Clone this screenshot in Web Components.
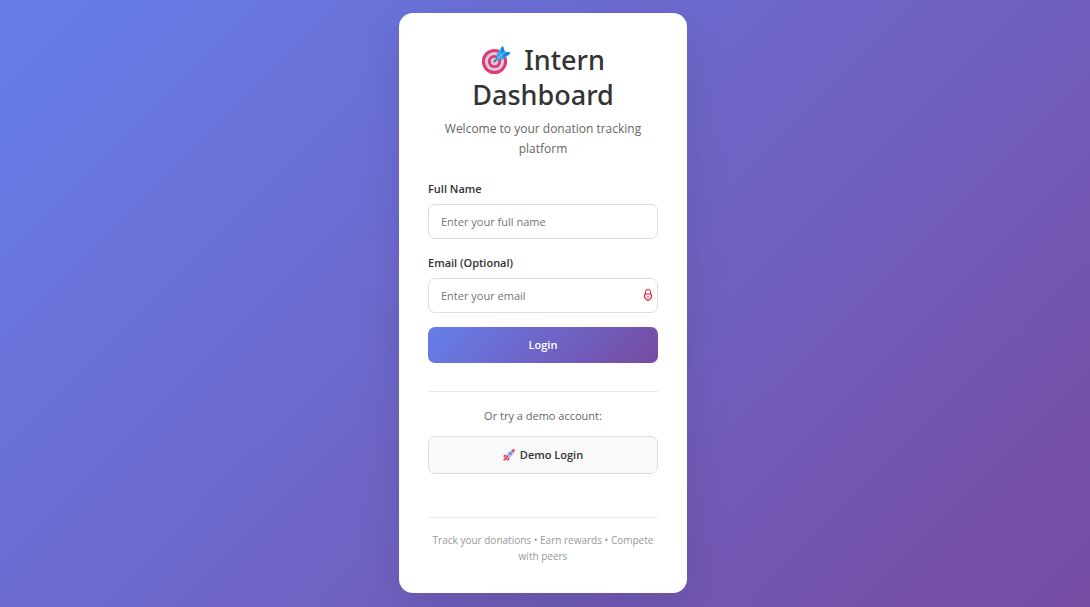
<!DOCTYPE html>
<html lang="en">
<head>
<meta charset="utf-8">
<meta name="viewport" content="width=device-width, initial-scale=1">
<title>Intern Dashboard</title>
<style>
body { margin: 0; font-family: "Open Sans", "Noto Sans", sans-serif; color: #333; }
</style>
</head>
<body>
<login-page>
  <login-card>
    <card-header>
      <span slot="title"><target-icon></target-icon> Intern Dashboard</span>
      <span slot="subtitle">Welcome to your donation tracking platform</span>
    </card-header>
    <login-form></login-form>
    <demo-section></demo-section>
    <card-footer>Track your donations • Earn rewards • Compete with peers</card-footer>
  </login-card>
</login-page>
<script>
const define = (name, html) => {
  const template = document.createElement('template');
  template.innerHTML = html;
  customElements.define(name, class extends HTMLElement {
    constructor() {
      super();
      this.attachShadow({ mode: 'open' }).append(template.content.cloneNode(true));
    }
  });
};

define('target-icon', `
<style>
:host { display: inline-block; width: 30px; height: 30px; margin-right: 6px; vertical-align: -5px; }
svg { display: block; width: 100%; height: 100%; }
</style>
<svg viewBox="0 0 30 30" aria-hidden="true">
  <circle cx="13.5" cy="16.5" r="12.6" fill="#e23a6c"/>
  <circle cx="13.5" cy="16.5" r="9.6" fill="#d5cbe2"/>
  <circle cx="13.5" cy="16.5" r="6.6" fill="#e23a6c"/>
  <circle cx="13.5" cy="16.5" r="3.7" fill="#d5cbe2"/>
  <path d="M13.2 16.7 18.5 11.5" stroke="#596a91" stroke-width="1.8" stroke-linecap="round"/>
  <path d="M15.6 14.8 15.8 9.2 20.3 2.5 22 1.2 23.6 6.3 29.2 7.6 28.2 9.4 21.3 14.8Z" fill="#35a9ee"/>
  <path d="m20.3 2.5 1.7-1.3 1.6 5.1-3.3 3.8Zm1.6 7.3 3.8-2.7 3.5.5-1 1.8-6.4 3.3Z" fill="#1685d9"/>
  <path d="m17 13.4 6-6" stroke="#8bd5fa" stroke-width="1"/>
</svg>`);

define('rocket-icon', `
<style>
:host { display: block; width: 12px; height: 12px; }
svg { display: block; width: 100%; height: 100%; }
</style>
<svg viewBox="0 0 12 12" aria-hidden="true">
  <path d="M3.1 5.4 1 6.2.4 8.1l2.3-.4Zm3.5 3.4-.6 2.1-1.7.7.1-2.4Z" fill="#e72661"/>
  <path d="m3.2 7.8 1.2 1.1-1.2 2L.3 11.8l.7-2.9Z" fill="#f13b65"/>
  <path d="m2.8 9-.3 1.1-1.1.4.4-1.1Z" fill="#ffc83d"/>
  <path d="M2.5 7.6C4 3.8 6.8 1 11.6.4 11.2 5.1 8.2 8 4.5 9.6Z" fill="#c5bbd9"/>
  <path d="M8.3 1.2Q9.8.5 11.7.3q-.2 1.9-.9 3.4Z" fill="#ed315f"/>
  <circle cx="7.4" cy="4.5" r="1.3" fill="#348ed4"/>
  <path d="m3.3 8.6 1.8-1.7" stroke="#e42a61" stroke-width="1.1" stroke-linecap="round"/>
</svg>`);

define('lock-icon', `
<style>
:host { display: block; width: 8px; height: 12px; }
svg { display: block; width: 100%; height: 100%; }
</style>
<svg viewBox="0 0 8 12" fill="none" stroke="#e8112d" aria-hidden="true">
  <path d="M1.5 5V2.8a2.5 2.3 0 0 1 5 0V5" stroke-width="1"/>
  <path d="M1.1 5h5.8q.7 1.1.5 2.8Q7 10.3 4 11.4 1 10.3.6 7.8.4 6.1 1.1 5Z" stroke-width="1.2"/>
  <path d="M4 6.8v2" stroke-width="1.1"/>
</svg>`);

define('login-page', `
<style>
:host {
  display: flex; align-items: center; justify-content: center; box-sizing: border-box;
  min-height: 100vh; padding: 12px 18px 14px 14px; background: linear-gradient(135deg, #667eea 0%, #764ba2 100%);
}
</style>
<slot></slot>`);

define('login-card', `
<style>
:host {
  display: block; box-sizing: border-box; width: 100%; max-width: 288px; padding: 29px;
  background: #fff; border-radius: 14px; box-shadow: 0 14px 42px rgba(0, 0, 0, .1);
}
</style>
<slot></slot>`);

define('card-header', `
<style>
:host { display: block; text-align: center; }
h1 { margin: 0 0 7px; font-family: "Noto Sans", "Open Sans", sans-serif; font-size: 27px; line-height: 35px; font-weight: 500; }
p { margin: 0; font-size: 12px; line-height: 20px; color: #666; }
</style>
<h1><slot name="title"></slot></h1>
<p><slot name="subtitle"></slot></p>`);

customElements.define('text-field', class extends HTMLElement {
  connectedCallback() {
    const root = this.attachShadow({ mode: 'open' });
    root.innerHTML = `
<style>
:host { display: block; }
label { display: block; margin-bottom: 5px; font-size: 11px; line-height: 20px; font-weight: 600; }
.box { position: relative; }
input {
  display: block; box-sizing: border-box; width: 100%; height: 35px; padding: 0 12px;
  border: 1px solid #dadee4; border-radius: 7px; background: #fff;
  font: inherit; font-size: 11px; color: #333; outline: none;
}
input::placeholder { color: #757575; }
input:focus { border-color: #667eea; }
::slotted(lock-icon) { position: absolute; right: 6px; top: 11px; }
</style>
<label for="field"></label>
<div class="box"><input id="field"><slot></slot></div>`;
    root.querySelector('label').textContent = this.getAttribute('label');
    const input = root.querySelector('input');
    input.type = this.getAttribute('type') || 'text';
    input.placeholder = this.getAttribute('placeholder');
  }
});

define('login-form', `
<style>
:host { display: block; margin-top: 20px; }
form { display: grid; gap: 14px; margin: 0; }
button {
  height: 36px; border: 0; border-radius: 7px; color: #fff; cursor: pointer;
  background: linear-gradient(135deg, #667eea 0%, #764ba2 100%);
  font: inherit; font-size: 11px; font-weight: 600;
}
</style>
<form>
  <text-field label="Full Name" placeholder="Enter your full name"></text-field>
  <text-field label="Email (Optional)" type="email" placeholder="Enter your email"><lock-icon></lock-icon></text-field>
  <button type="button">Login</button>
</form>`);

define('demo-section', `
<style>
:host { display: block; margin-top: 28px; padding-top: 14px; border-top: 1px solid #e9ebee; text-align: center; }
p { margin: 0 0 10px; font-size: 11px; line-height: 20px; color: #666; }
button {
  display: flex; align-items: center; justify-content: center; gap: 5px;
  width: 100%; height: 38px; border: 1px solid #dadee4; border-radius: 7px;
  background: #f8f9fb; color: #333; cursor: pointer; font: inherit; font-size: 11px; font-weight: 600;
}
</style>
<p>Or try a demo account:</p>
<button type="button"><rocket-icon></rocket-icon>Demo Login</button>`);

define('card-footer', `
<style>
:host {
  display: block; margin-top: 43px; padding-top: 14px; border-top: 1px solid #e9ebee;
  text-align: center; font-size: 10px; line-height: 16px; color: #999;
}
</style>
<slot></slot>`);
</script>
</body>
</html>
